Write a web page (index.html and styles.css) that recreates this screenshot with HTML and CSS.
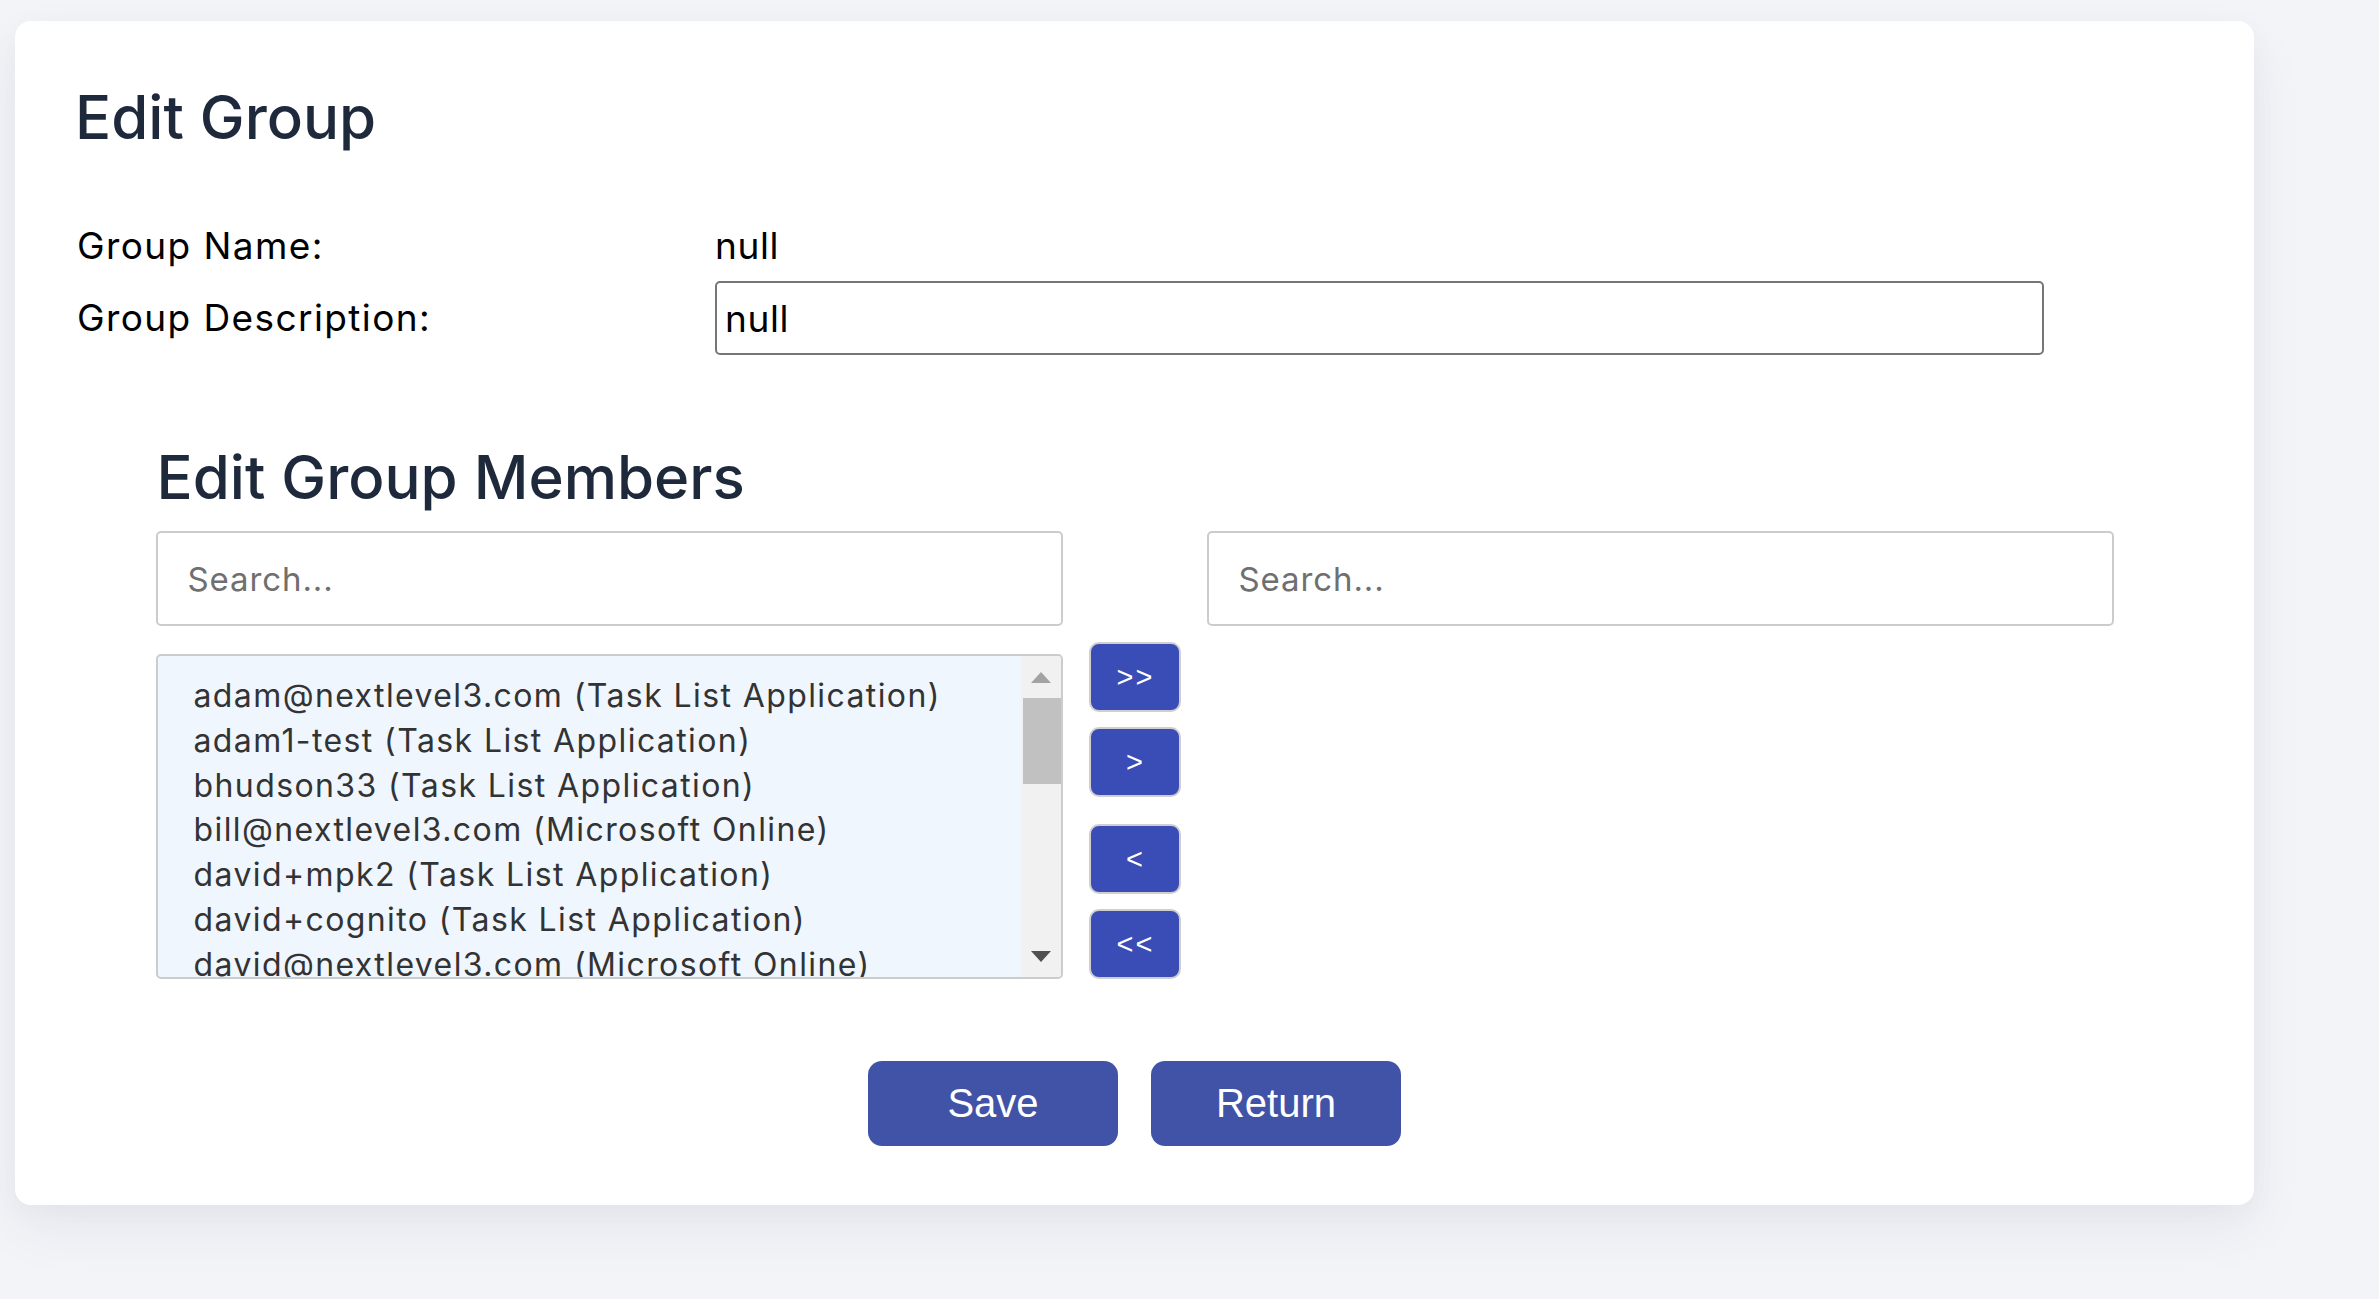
FILE: index.html
```html
<!DOCTYPE html>
<html lang="en">
<head>
<meta charset="utf-8">
<title>Edit Group</title>
<link rel="stylesheet" href="styles.css">
</head>
<body>
<main class="card">
  <h1 class="title">Edit Group</h1>
  <div class="form">
    <div class="label">Group Name:</div>
    <div class="value">null</div>
    <label class="label" for="desc">Group Description:</label>
    <input id="desc" class="text-input" type="text" value="null">
  </div>

  <section class="members">
    <h2 class="title">Edit Group Members</h2>
    <div class="dual">
      <input class="search" type="text" placeholder="Search...">
      <div></div>
      <input class="search" type="text" placeholder="Search...">

      <div class="listbox">
        <ul class="items">
          <li>adam@nextlevel3.com (Task List Application)</li>
          <li>adam1-test (Task List Application)</li>
          <li>bhudson33 (Task List Application)</li>
          <li>bill@nextlevel3.com (Microsoft Online)</li>
          <li>david+mpk2 (Task List Application)</li>
          <li>david+cognito (Task List Application)</li>
          <li>david@nextlevel3.com (Microsoft Online)</li>
        </ul>
        <div class="scrollbar">
          <div class="sb-btn"><span class="tri-up"></span></div>
          <div class="sb-thumb"></div>
          <div class="sb-track"></div>
          <div class="sb-btn"><span class="tri-down"></span></div>
        </div>
      </div>
      <div class="movers">
        <button class="mover">&gt;&gt;</button>
        <button class="mover">&gt;</button>
        <button class="mover mover-sep">&lt;</button>
        <button class="mover">&lt;&lt;</button>
      </div>
      <div></div>
    </div>
  </section>

  <div class="actions">
    <button class="action">Save</button>
    <button class="action">Return</button>
  </div>
</main>
</body>
</html>
```

FILE: styles.css
```css
* { box-sizing: border-box; }

html, body {
  margin: 0;
  background: #f3f4f8;
}

body {
  padding: 21px 0 0 15px;
  min-height: 1299px;
  font-family: Inter, "Noto Sans", sans-serif;
}

.card {
  width: 2239px;
  background: #ffffff;
  border-radius: 16px;
  padding: 60px 60px 59px 60px;
  box-shadow: 0 24px 60px rgba(30, 40, 80, 0.055), 0 8px 30px rgba(30, 40, 80, 0.03);
}

.title {
  margin: 0;
  font-size: 60px;
  font-weight: 500;
  color: #1e293b;
  line-height: 72px;
}

.form {
  display: grid;
  grid-template-columns: 638px 1329px;
  align-items: center;
  row-gap: 12px;
  margin-top: 70px;
  padding-left: 2px;
}

.label,
.value {
  font-size: 37px;
  color: #000;
  line-height: 46px;
  letter-spacing: 1.4px;
}

.value {
  letter-spacing: 0.6px;
}

.text-input {
  width: 1329px;
  height: 74px;
  border: 2px solid #767676;
  border-radius: 5px;
  padding: 0 8px;
  font-family: Inter, "Noto Sans", sans-serif;
  font-size: 37px;
  letter-spacing: 0.6px;
  color: #000;
  background: #fff;
  outline: none;
}

.members {
  width: 1958px;
  margin: 86px auto 0;
}

.members .title {
  padding-left: 1px;
}

.dual {
  display: grid;
  grid-template-columns: 907px 144px 907px;
  row-gap: 16px;
  align-items: end;
  margin-top: 18px;
}

.search {
  width: 907px;
  height: 95px;
  border: 2px solid #cccccc;
  border-radius: 5px;
  padding: 0 30px;
  font-family: Inter, "Noto Sans", sans-serif;
  font-size: 33px;
  letter-spacing: 0.9px;
  color: #333;
  background: #fff;
  outline: none;
}

.search::placeholder {
  color: #6f6f6f;
}

.listbox {
  display: flex;
  height: 325px;
  border: 2px solid #cccccc;
  border-radius: 5px;
  background: #eff6fe;
  overflow: hidden;
}

.items {
  flex: 1;
  margin: 0;
  padding: 18px 0 0 36px;
  list-style: none;
  overflow: hidden;
  font-size: 32px;
  line-height: 44.8px;
  letter-spacing: 1.4px;
  color: #333333;
  white-space: nowrap;
}

.scrollbar {
  width: 40px;
  display: flex;
  flex-direction: column;
  background: #f1f1f1;
}

.sb-btn {
  height: 42px;
  display: flex;
  align-items: center;
  justify-content: center;
}

.tri-up {
  width: 0;
  height: 0;
  border-left: 10px solid transparent;
  border-right: 10px solid transparent;
  border-bottom: 11px solid #a3a3a3;
}

.tri-down {
  width: 0;
  height: 0;
  border-left: 10px solid transparent;
  border-right: 10px solid transparent;
  border-top: 11px solid #505050;
}

.sb-thumb {
  height: 86px;
  margin-left: 2px;
  background: #c1c1c1;
}

.sb-track {
  flex: 1;
}

.movers {
  display: flex;
  flex-direction: column;
  align-items: center;
  gap: 15px;
}

.mover {
  width: 92px;
  height: 70px;
  border: 2px solid #cfcfcf;
  border-radius: 10px;
  background: #3a4cb6;
  color: #ffffff;
  font-family: "Liberation Sans", Arial, sans-serif;
  font-size: 29px;
  letter-spacing: 2px;
  padding: 0 0 0 2px;
}

.mover-sep {
  margin-top: 12px;
}

.actions {
  display: flex;
  justify-content: center;
  gap: 33px;
  margin-top: 82px;
}

.action {
  width: 250px;
  height: 85px;
  border: none;
  border-radius: 14px;
  background: #4153a6;
  color: #ffffff;
  font-family: "Liberation Sans", Arial, sans-serif;
  font-size: 40px;
  padding: 0;
}
```
